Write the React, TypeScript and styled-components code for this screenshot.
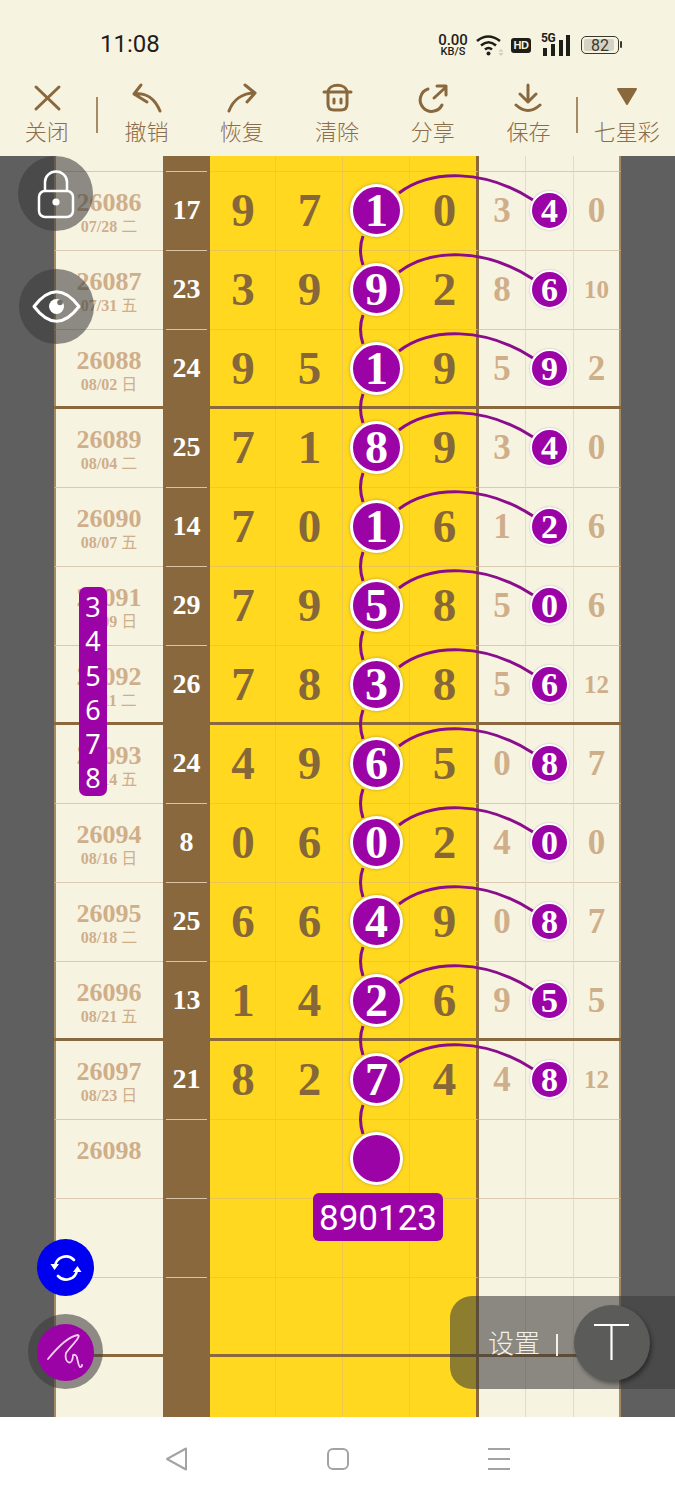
import React from 'react';
import styled, { createGlobalStyle } from 'styled-components';

const CREAM = '#f7f3e1';
const BROWN = '#8a683d';
const YELLOW = '#ffd81f';
const PURPLE = '#9c03a6';
const TAN = '#cfae8a';
const SERIF = '"Liberation Serif", serif';
const CJK = '"Noto Sans CJK SC", "Noto Sans", sans-serif';

const GlobalStyle = createGlobalStyle`
	html, body { margin: 0; padding: 0; background: ${CREAM}; }
`;

const Page = styled.div`
	position: relative;
	width: 675px;
	height: 1500px;
	overflow: hidden;
	background: ${CREAM};
	font-family: ${CJK};
`;

/* Status bar */
const StatusBar = styled.div`
	display: flex;
	align-items: center;
	height: 78px;
	padding: 12px 56px 0 100px;
	box-sizing: border-box;
	color: #1f1d18;
`;
const Clock = styled.div`
	font: 400 24px Roboto, sans-serif;
	margin-right: auto;
	position: relative;
	top: -1px;
`;
const Speed = styled.div`
	display: flex;
	flex-direction: column;
	align-items: center;
	width: 30px;
	font-family: Roboto, sans-serif;
	font-weight: 500;
	line-height: 1;
	margin-right: 8px;
`;
const SpeedValue = styled.span`font-size: 15px; height: 13px;`;
const SpeedUnit = styled.span`font-size: 11px;`;
const HdBadge = styled.div`
	width: 20px;
	height: 15px;
	margin: 0 10px 0 7px;
	border-radius: 3px;
	background: #1f1d18;
	color: ${CREAM};
	font: 700 11px/15px "Liberation Sans", sans-serif;
	letter-spacing: -0.5px;
	text-align: center;
`;
const Signal = styled.div`
	position: relative;
	width: 30px;
	height: 22px;
	margin-right: 10px;
`;
const SignalLabel = styled.span`
	position: absolute;
	left: 0;
	top: -2px;
	font: 700 12px/12px Roboto, sans-serif;
	letter-spacing: -0.5px;
`;
const Battery = styled.div`
	position: relative;
	width: 38px;
	height: 18px;
	border: 1.5px solid #3a372e;
	border-radius: 5px;
	box-sizing: border-box;
	padding: 2px;
	font: 400 16px/13px Roboto, sans-serif;
	color: #3a372e;
	text-align: center;
	&::before {
		content: '';
		position: absolute;
		left: 2px;
		top: 2px;
		bottom: 2px;
		width: 82%;
		border-radius: 2px;
		background: #d5d2c4;
	}
	&::after {
		content: '';
		position: absolute;
		right: -4px;
		top: 4px;
		width: 2px;
		height: 7px;
		border-radius: 1px;
		background: #3a372e;
	}
`;
const BatteryValue = styled.span`position: relative;`;

/* Toolbar */
const Toolbar = styled.div`
	display: flex;
	height: 78px;
`;
const Tool = styled.div<{ $w: number }>`
	width: ${(p) => p.$w}px;
	display: flex;
	flex-direction: column;
	align-items: center;
	color: #8b6d49;
	font-size: 22px;
	line-height: 30px;
	font-weight: 300;
	white-space: nowrap;
	svg { display: block; height: 40px; width: 40px; }
	span { margin-top: -3px; }
`;
const ToolDivider = styled.div<{ $ml: number; $mr: number }>`
	width: 2px;
	height: 36px;
	margin: 19px ${(p) => p.$mr}px 0 ${(p) => p.$ml}px;
	background: #a58a63;
`;

/* Board */
const Board = styled.div`
	position: relative;
	height: 1261px;
`;
const Row = styled.div<{ $h: number; $thick?: boolean }>`
	position: relative;
	display: grid;
	grid-template-columns: 54px 109px 47px 66px 67px 67px 69px 47px 48px 47px 54px;
	height: ${(p) => p.$h}px;
	${(p) =>
		p.$thick &&
		`&::before {
			content: '';
			position: absolute;
			left: 54px;
			right: 54px;
			top: -2px;
			height: 3px;
			background: ${BROWN};
			z-index: 1;
		}`}
`;
const Gutter = styled.div`
	background: #5f5f5f;
`;
const Cell = styled.div<{ $line?: boolean }>`
	display: flex;
	align-items: center;
	justify-content: center;
	box-sizing: border-box;
	padding-bottom: 1px;
	font-family: ${SERIF};
	font-weight: 700;
	line-height: 1;
	border-top: ${(p) => (p.$line ? '1px solid #dccab0' : '0')};
`;
const DateCell = styled(Cell)`
	flex-direction: column;
	padding: 1px 0 0;
	background: ${CREAM};
	border-left: 2px solid #a58a63;
	color: ${TAN};
`;
const DrawNo = styled.div`
	font-size: 26px;
	line-height: 28px;
	margin-right: 1px;
`;
const DrawDate = styled.div`
	font-size: 16px;
	line-height: 20px;
	height: 20px;
	margin: -2px 1px 0 0;
	span { font-family: ${CJK}; font-weight: 400; margin-left: 4px; }
`;
const SumCell = styled(Cell)`
	position: relative;
	border-top: 0;
	background: ${BROWN};
	color: #fff;
	font-size: 28px;
	${(p) =>
		p.$line &&
		`&::before {
			content: '';
			position: absolute;
			left: 3px;
			right: 3px;
			top: 0;
			height: 1px;
			background: #d8c4a4;
		}`}
`;
const MainCell = styled(Cell)<{ $end?: boolean }>`
	background: ${YELLOW};
	color: #85673a;
	font-size: 47px;
	padding-left: ${(p) => (p.$end ? 3 : 1)}px;
	border-top-color: #e9c654;
	border-right: ${(p) => (p.$end ? `3px solid ${BROWN}` : '1px solid #ecc84e')};
`;
const SideCell = styled(Cell)<{ $small?: boolean; $end?: boolean }>`
	background: ${CREAM};
	color: ${TAN};
	font-size: ${(p) => (p.$small ? 25 : 35)}px;
	border-right: ${(p) => (p.$end ? '2px solid #a58a63' : '1px solid #e6dac4')};
`;
const Ball = styled.div`
	position: relative;
	z-index: 3;
	flex: none;
	width: 53px;
	height: 53px;
	border: 3px solid #fff;
	border-radius: 50%;
	box-sizing: border-box;
	display: flex;
	align-items: center;
	justify-content: center;
	background: ${PURPLE};
	color: #fff;
	font-size: 46px;
	box-shadow: 0 0 3px rgba(120, 100, 40, 0.55);
`;
const SmallBall = styled(Ball)`
	width: 39px;
	height: 39px;
	border-width: 2px;
	font-size: 34px;
	box-shadow: 0 0 2px rgba(150, 120, 170, 0.6);
`;
const Links = styled.svg`
	position: absolute;
	left: 0;
	top: 0;
	z-index: 2;
	pointer-events: none;
`;
const NumberTag = styled.div`
	position: absolute;
	left: 313px;
	top: 1037px;
	z-index: 3;
	width: 130px;
	height: 48px;
	border-radius: 6px;
	background: ${PURPLE};
	color: #fff;
	font: 400 35px/52px Roboto, sans-serif;
	text-align: center;
`;
const Candidates = styled.div`
	position: absolute;
	left: 79px;
	top: 431px;
	z-index: 4;
	width: 28px;
	height: 209px;
	padding-top: 3px;
	box-sizing: border-box;
	border-radius: 7px;
	background: ${PURPLE};
	color: #fff;
	font: 400 27px/34.3px "Noto Sans", sans-serif;
	text-align: center;
`;

/* Floating controls */
const RoundShade = styled.div<{ $x: number; $y: number }>`
	position: absolute;
	left: ${(p) => p.$x}px;
	top: ${(p) => p.$y}px;
	width: 75px;
	height: 75px;
	border-radius: 50%;
	background: rgba(58, 58, 58, 0.57);
	z-index: 5;
	display: flex;
	align-items: center;
	justify-content: center;
`;
const FloatDot = styled.div<{ $bg: string; $top: number }>`
	position: absolute;
	left: 37px;
	top: ${(p) => p.$top}px;
	width: 57px;
	height: 57px;
	border-radius: 50%;
	background: ${(p) => p.$bg};
	z-index: 6;
	display: flex;
	align-items: center;
	justify-content: center;
`;
const SettingsDock = styled.div`
	position: absolute;
	left: 450px;
	right: 0;
	top: 1296px;
	height: 93px;
	border-radius: 22px 0 0 22px;
	background: rgba(58, 58, 58, 0.58);
	z-index: 5;
	display: flex;
	align-items: center;
	padding-left: 38px;
	box-sizing: border-box;
	color: #f3f1ea;
	font-size: 26px;
	font-weight: 300;
`;
const DockBar = styled.div`
	width: 2px;
	height: 22px;
	margin: 4px 16px 0 16px;
	background: #f3f1ea;
`;
const DockLabel = styled.span`
	position: relative;
	top: -1px;
`;
const DockKnob = styled.div`
	width: 76px;
	height: 76px;
	border-radius: 50%;
	background: #5b5b5a;
	box-shadow: 2px 3px 4px rgba(0, 0, 0, 0.4);
	display: flex;
	align-items: center;
	justify-content: center;
`;

/* Navigation bar */
const NavBar = styled.div`
	height: 83px;
	background: #fff;
	display: flex;
	align-items: center;
	justify-content: center;
	gap: 136px;
	padding-left: 1px;
	box-sizing: border-box;
	svg { display: block; }
`;

const rows = [
	{ no: '26086', date: '07/28', day: '二', sum: '17', main: [9, 7, 1, 0], side: [3, 4, 0] },
	{ no: '26087', date: '07/31', day: '五', sum: '23', main: [3, 9, 9, 2], side: [8, 6, 10] },
	{ no: '26088', date: '08/02', day: '日', sum: '24', main: [9, 5, 1, 9], side: [5, 9, 2] },
	{ no: '26089', date: '08/04', day: '二', sum: '25', main: [7, 1, 8, 9], side: [3, 4, 0], thick: true },
	{ no: '26090', date: '08/07', day: '五', sum: '14', main: [7, 0, 1, 6], side: [1, 2, 6] },
	{ no: '26091', date: '08/09', day: '日', sum: '29', main: [7, 9, 5, 8], side: [5, 0, 6] },
	{ no: '26092', date: '08/11', day: '二', sum: '26', main: [7, 8, 3, 8], side: [5, 6, 12] },
	{ no: '26093', date: '08/14', day: '五', sum: '24', main: [4, 9, 6, 5], side: [0, 8, 7], thick: true },
	{ no: '26094', date: '08/16', day: '日', sum: '8', main: [0, 6, 0, 2], side: [4, 0, 0] },
	{ no: '26095', date: '08/18', day: '二', sum: '25', main: [6, 6, 4, 9], side: [0, 8, 7] },
	{ no: '26096', date: '08/21', day: '五', sum: '13', main: [1, 4, 2, 6], side: [9, 5, 5] },
	{ no: '26097', date: '08/23', day: '日', sum: '21', main: [8, 2, 7, 4], side: [4, 8, 12], thick: true },
];

const tools = [
	{ label: '撤销', w: 96, d: 'M14 7 L7 16 L20 24 M7 16 C19 14 28 21 33 33' },
	{ label: '恢复', w: 95, d: 'M23 7 L33 15 L25 24 M33 15 C20 15 11 22 7 33' },
	{ label: '清除', w: 96, d: 'M7 14 H34 M11 14 C12 5 29 5 30 14 M11 14 V26 Q11 32 17 32 H24 Q30 32 30 26 V14 M17 21 V25 M24 21 V25' },
	{ label: '分享', w: 96, d: 'M15 11 A11.5 11.5 0 1 0 29 27 M21 20 L33 9 M24 8 H33 V17' },
	{ label: '保存', w: 96, d: 'M20 7 V24 M12 16 L20 24 L28 16 M8 27 Q20 38 32 27' },
];

const EmptyCells = ({ line = true, ball = false }: { line?: boolean; ball?: boolean }) => (
	<>
		<MainCell $line={line} />
		<MainCell $line={line} />
		<MainCell $line={line}>{ball ? <Ball /> : null}</MainCell>
		<MainCell $line={line} $end />
		<SideCell $line={line} />
		<SideCell $line={line} />
		<SideCell $line={line} $end />
	</>
);

const LinkLines = () => {
	const path = rows
		.map((_, i) => {
			const y = 54 + i * 79;
			return `M399 ${y - 17} C431 ${y - 41} 485 ${y - 41} 533 ${y - 10} M363 ${y + 26} Q358 ${y + 40} 363 ${y + 55}`;
		})
		.join(' ');
	return (
		<Links width="675" height="1261" viewBox="0 0 675 1261">
			<path d={path} fill="none" stroke="#8a0d8c" strokeWidth="3" />
		</Links>
	);
};

const App = () => {
	return (
		<Page>
			<GlobalStyle />
			<StatusBar>
				<Clock>11:08</Clock>
				<Speed>
					<SpeedValue>0.00</SpeedValue>
					<SpeedUnit>KB/S</SpeedUnit>
				</Speed>
				<svg width="28" height="22" viewBox="0 0 28 22">
					<g fill="none" stroke="#1f1d18" strokeWidth="2.6">
						<path d="M1 7 Q12 -2 24 7" />
						<path d="M5 11.5 Q12.5 5 20 11.5" />
						<path d="M9 15.5 Q12.5 12.5 16 15.5" />
					</g>
					<circle cx="12.5" cy="19.5" r="2" fill="#1f1d18" />
					<path d="M25 15 L27.5 17.5 H22.5 Z M25 22 L27.5 19 H22.5 Z" fill="#cfcbbd" />
				</svg>
				<HdBadge>HD</HdBadge>
				<Signal>
					<SignalLabel>5G</SignalLabel>
					<svg width="30" height="22" viewBox="0 0 30 22">
						<rect x="2" y="14" width="4" height="8" fill="#1f1d18" />
						<rect x="10" y="10" width="4" height="12" fill="#1f1d18" />
						<rect x="18" y="6" width="4" height="16" fill="#1f1d18" />
						<rect x="25" y="1" width="4" height="21" fill="#1f1d18" />
					</svg>
				</Signal>
				<Battery>
					<BatteryValue>82</BatteryValue>
				</Battery>
			</StatusBar>

			<Toolbar>
				<Tool $w={94}>
					<svg viewBox="0 0 40 40">
						<path d="M9 9 L32 31 M32 9 L9 31" fill="none" stroke="#8a683d" strokeWidth="3" strokeLinecap="round" />
					</svg>
					<span>关闭</span>
				</Tool>
				<ToolDivider $ml={2} $mr={1} />
				{tools.map((tool) => (
					<Tool key={tool.label} $w={tool.w}>
						<svg viewBox="0 0 40 40">
							<path d={tool.d} fill="none" stroke="#8a683d" strokeWidth="3" strokeLinecap="round" strokeLinejoin="round" />
						</svg>
						<span>{tool.label}</span>
					</Tool>
				))}
				<ToolDivider $ml={0} $mr={0} />
				<Tool $w={97}>
					<svg viewBox="0 0 40 40">
						<path d="M11 11 H29 L20 26 Z" fill="#8a683d" stroke="#8a683d" strokeWidth="2" strokeLinejoin="round" />
					</svg>
					<span>七星彩</span>
				</Tool>
			</Toolbar>

			<Board>
				<Row $h={15}>
					<Gutter />
					<DateCell />
					<SumCell />
					<EmptyCells line={false} />
					<Gutter />
				</Row>
				{rows.map((row) => (
					<Row key={row.no} $h={79} $thick={row.thick}>
						<Gutter />
						<DateCell $line>
							<DrawNo>{row.no}</DrawNo>
							<DrawDate>
								{row.date}
								<span>{row.day}</span>
							</DrawDate>
						</DateCell>
						<SumCell $line={!row.thick}>{row.sum}</SumCell>
						{row.main.map((n, i) => (
							<MainCell key={i} $line $end={i === 3}>
								{i === 2 ? <Ball>{n}</Ball> : n}
							</MainCell>
						))}
						{row.side.map((n, i) => (
							<SideCell key={i} $line $end={i === 2} $small={n > 9}>
								{i === 1 ? <SmallBall>{n}</SmallBall> : n}
							</SideCell>
						))}
						<Gutter />
					</Row>
				))}
				<Row $h={79}>
					<Gutter />
					<DateCell $line>
						<DrawNo>26098</DrawNo>
						<DrawDate />
					</DateCell>
					<SumCell $line />
					<EmptyCells ball />
					<Gutter />
				</Row>
				{[0, 1].map((i) => (
					<Row key={i} $h={79}>
						<Gutter />
						<DateCell $line />
						<SumCell $line />
						<EmptyCells />
						<Gutter />
					</Row>
				))}
				<Row $h={61} $thick>
					<Gutter />
					<DateCell />
					<SumCell />
					<EmptyCells line={false} />
					<Gutter />
				</Row>
				<LinkLines />
				<NumberTag>890123</NumberTag>
				<Candidates>
					3<br />4<br />5<br />6<br />7<br />8
				</Candidates>
			</Board>

			<NavBar>
				<svg width="26" height="26" viewBox="0 0 26 26">
					<path d="M3 13 L22 2.5 V23.5 Z" fill="none" stroke="#a3a3a3" strokeWidth="2" strokeLinejoin="round" />
				</svg>
				<svg width="24" height="24" viewBox="0 0 24 24">
					<rect x="2" y="2" width="20" height="20" rx="5" fill="none" stroke="#a3a3a3" strokeWidth="2" />
				</svg>
				<svg width="26" height="26" viewBox="0 0 26 26">
					<path d="M2 3 H24 M2 13 H24 M2 23 H24" stroke="#a3a3a3" strokeWidth="2" />
				</svg>
			</NavBar>

			<RoundShade $x={18} $y={156}>
				<svg width="75" height="75" viewBox="0 0 75 75">
					<rect x="21" y="35" width="34" height="26" rx="6" fill="none" stroke="#fff" strokeWidth="2.5" />
					<path d="M27 35 V26 A11 10.5 0 0 1 49 26 V35" fill="none" stroke="#fff" strokeWidth="2.5" />
					<circle cx="38" cy="46" r="3.6" fill="#fff" />
				</svg>
			</RoundShade>
			<RoundShade $x={19} $y={269}>
				<svg width="75" height="75" viewBox="0 0 75 75">
					<path d="M15 37.5 Q37.5 8 60 37.5 Q37.5 67 15 37.5 Z" fill="none" stroke="#fff" strokeWidth="3" strokeLinejoin="round" />
					<circle cx="37.5" cy="37.5" r="7.5" fill="#fff" />
					<circle cx="41" cy="33.5" r="2.8" fill="#6f6f6c" />
				</svg>
			</RoundShade>

			<FloatDot $bg="#0000f0" $top={1239}>
				<svg width="34" height="34" viewBox="0 0 34 34">
					<g fill="none" stroke="#fff" strokeWidth="2.6" strokeLinecap="round">
						<path d="M6 15 A11 11 0 0 1 25 9" />
						<path d="M28 19 A11 11 0 0 1 9 25" />
					</g>
					<path d="M1.5 13 L10 13 L5.5 19 Z M24 21 L32.5 21 L28.5 15 Z" fill="#fff" />
				</svg>
			</FloatDot>
			<RoundShade $x={28} $y={1314} />
			<FloatDot $bg={PURPLE} $top={1324}>
				<svg width="57" height="57" viewBox="0 0 57 57">
					<path
						d="M11 35 C20 24 32 12 41 11 C45 12 32 24 29 29 C28 33 29 37 31 38 C34 40 36 36 36 31 C38 30 40 32 40 34 C41 38 42 43 43 43 C44 43 45 42 45 41"
						fill="none"
						stroke="#f6cdf0"
						strokeWidth="1.8"
						strokeLinecap="round"
						strokeLinejoin="round"
					/>
				</svg>
			</FloatDot>

			<SettingsDock>
				<DockLabel>设置</DockLabel>
				<DockBar />
				<DockKnob>
					<svg width="40" height="40" viewBox="0 0 40 40">
						<path d="M2 2 H37 M19.5 2 V37" stroke="#fff" strokeWidth="2.2" fill="none" />
					</svg>
				</DockKnob>
			</SettingsDock>
		</Page>
	);
};

export default App;
